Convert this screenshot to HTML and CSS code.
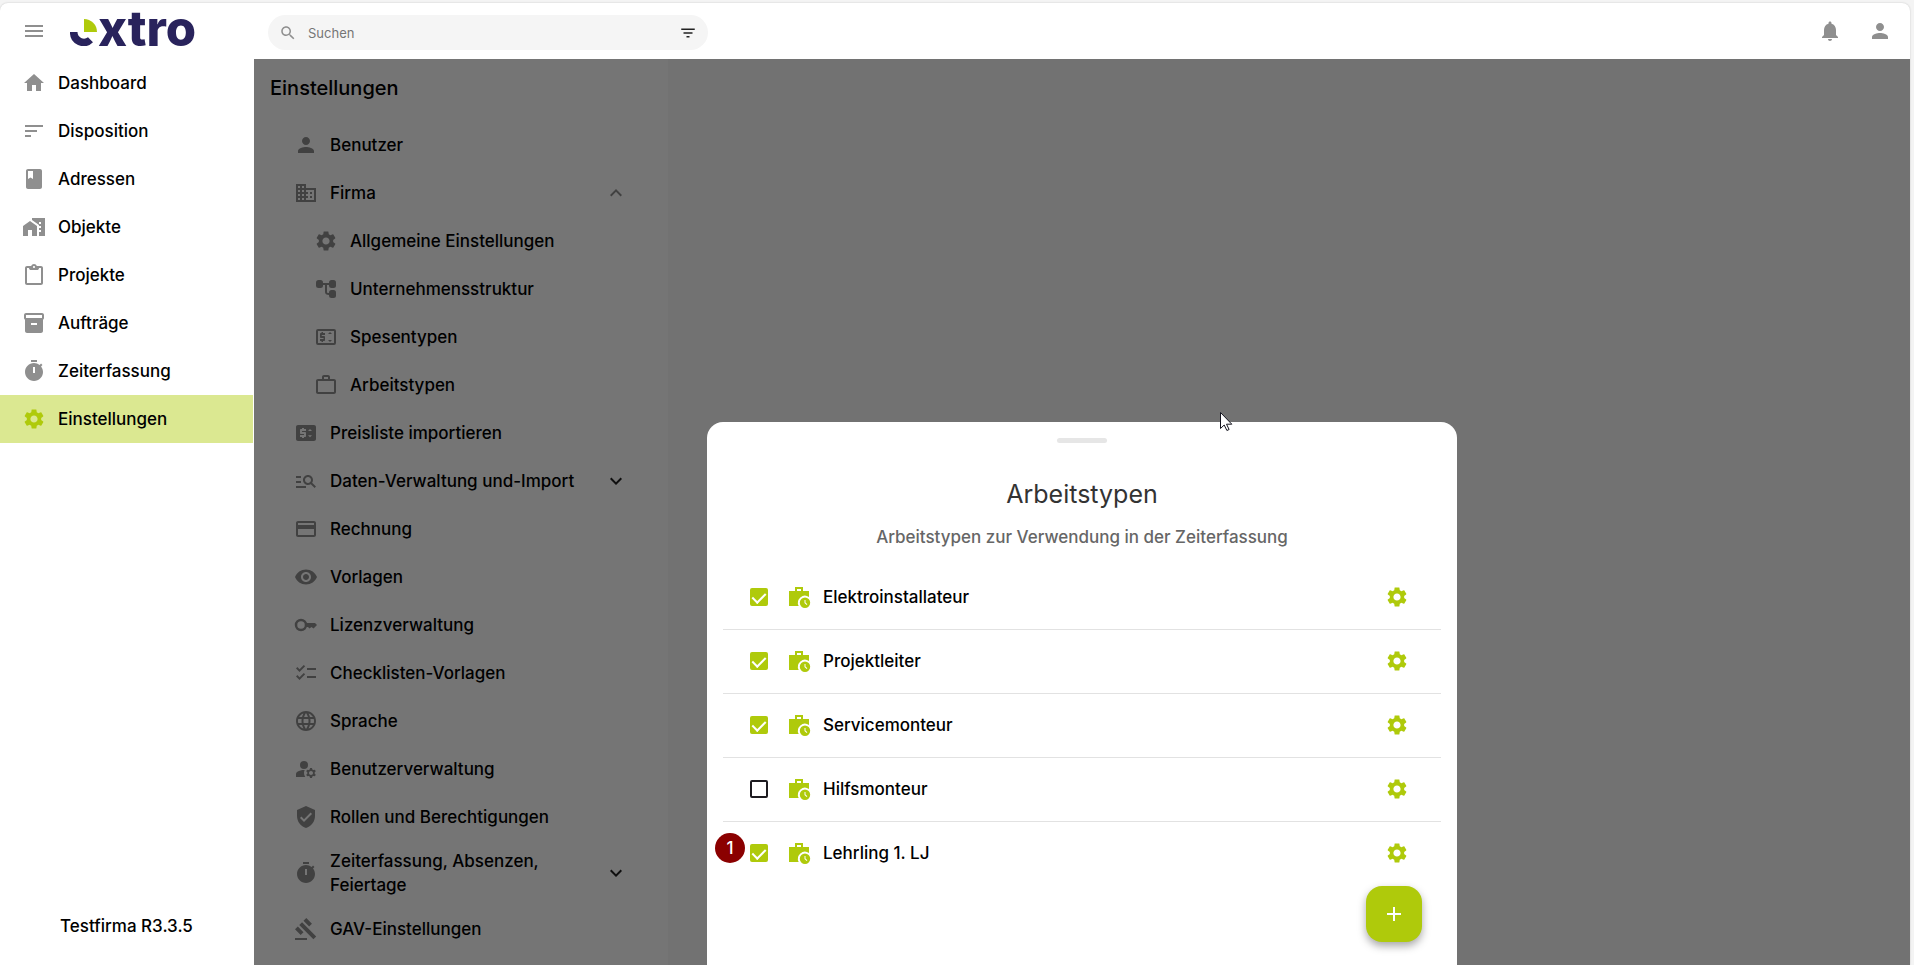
FILE: index.html
```html
<!DOCTYPE html>
<html lang="de">
<head>
  <meta charset="UTF-8">
  <meta name="viewport" content="width=device-width, initial-scale=1.0">
  <title>extro - Arbeitstypen</title>
  <link rel="stylesheet" href="styles.css">
</head>
<body>
  <!-- Icons -->
  <svg class="sprite" aria-hidden="true">
    <symbol id="i-menu" viewBox="0 0 24 24"><path d="M3 18h18v-2H3v2zm0-5h18v-2H3v2zm0-7v2h18V6H3z"/></symbol>
    <symbol id="i-search" viewBox="0 0 24 24"><path d="M15.5 14h-.79l-.28-.27C15.41 12.59 16 11.11 16 9.5 16 5.91 13.09 3 9.5 3S3 5.91 3 9.5 5.91 16 9.5 16c1.61 0 3.09-.59 4.23-1.57l.27.28v.79l5 4.99L20.49 19l-4.99-5zm-6 0C7.01 14 5 11.99 5 9.5S7.01 5 9.5 5 14 7.01 14 9.5 11.99 14 9.5 14z"/></symbol>
    <symbol id="i-filter" viewBox="0 0 24 24"><path d="M10 18h4v-2h-4v2zM3 6v2h18V6H3zm3 7h12v-2H6v2z"/></symbol>
    <symbol id="i-bell" viewBox="0 0 24 24"><path d="M12 22c1.1 0 2-.9 2-2h-4c0 1.1.89 2 2 2zm6-6v-5c0-3.07-1.64-5.64-4.5-6.32V4c0-.83-.67-1.5-1.5-1.5s-1.500.67-1.500 1.500v.68C7.630 5.360 6 7.920 6 11v5l-2 2v1h16v-1l-2-2z"/></symbol>
    <symbol id="i-person" viewBox="0 0 24 24"><path d="M12 12c2.210 0 4-1.790 4-4s-1.790-4-4-4-4 1.790-4 4 1.790 4 4 4zm0 2c-2.670 0-8 1.340-8 4v2h16v-2c0-2.660-5.330-4-8-4z"/></symbol>
    <symbol id="i-home" viewBox="0 0 24 24"><path d="M10 20v-6h4v6h5v-8h3L12 3 2 12h3v8z"/></symbol>
    <symbol id="i-sort" viewBox="0 0 24 24"><path d="M3 18h6v-2H3v2zM3 6v2h18V6H3zm0 7h12v-2H3v2z"/></symbol>
    <symbol id="i-book" viewBox="0 0 24 24"><path d="M18 2H6c-1.100 0-2 .9-2 2v16c0 1.100.9 2 2 2h12c1.100 0 2-.9 2-2V4c0-1.100-.9-2-2-2zM6 4h5v8l-2.500-1.500L6 12V4z"/></symbol>
    <symbol id="i-homework" viewBox="0 0 24 24"><path d="M1 11v10h5v-6h4v6h5V11L8 6z"/><path d="M10 3v1.970l7 5V11h2v2h-2v2h2v2h-2v4h6V3H10zm9 6h-2V7h2v2z"/></symbol>
    <symbol id="i-clipboard" viewBox="0 0 24 24"><path d="M19 3h-4.180C14.400 1.840 13.300 1 12 1s-2.400.84-2.820 2H5c-1.100 0-2 .9-2 2v15c0 1.100.9 2 2 2h14c1.100 0 2-.9 2-2V5c0-1.100-.9-2-2-2zm-7 0c.55 0 1 .45 1 1s-.45 1-1 1-1-.45-1-1 .45-1 1-1zm7 17H5V5h2c0 1.500 1 2 2 2h6c1 0 2-.5 2-2h2v15z"/></symbol>
    <symbol id="i-archive" viewBox="0 0 24 24"><path d="M20 2H4c-1 0-2 .9-2 2v3.010c0 .72.43 1.340 1 1.690V20c0 1.100 1.100 2 2 2h14c.9 0 2-.9 2-2V8.700c.57-.35 1-.97 1-1.690V4c0-1.100-1-2-2-2zm-5 12H9v-2h6v2zm5-7H4V4h16v3z"/></symbol>
    <symbol id="i-timer" viewBox="0 0 24 24"><path d="M15 1H9v2h6V1zm4.030 6.390l1.420-1.420c-.43-.51-.9-.99-1.410-1.410l-1.420 1.420C16.070 4.740 14.120 4 12 4c-4.970 0-9 4.030-9 9s4.020 9 9 9 9-4.030 9-9c0-2.120-.74-4.070-1.970-5.610zM13 14h-2V8h2v6z"/></symbol>
    <symbol id="i-gear" viewBox="0 0 24 24"><path fill-rule="evenodd" d="M19.140 12.940c.04-.3.06-.61.06-.94 0-.32-.02-.64-.07-.94l2.030-1.580c.18-.14.23-.41.12-.61l-1.920-3.320c-.12-.22-.37-.29-.59-.22l-2.390.96c-.5-.38-1.030-.7-1.620-.94l-.36-2.540c-.04-.24-.24-.41-.48-.41h-3.840c-.24 0-.43.17-.47.41l-.36 2.540c-.59.24-1.130.57-1.620.94l-2.390-.96c-.22-.08-.47 0-.59.22L2.740 8.870c-.12.21-.08.47.12.61l2.030 1.580c-.05.3-.09.63-.09.94s.02.64.07.94l-2.030 1.580c-.18.14-.23.41-.12.61l1.920 3.320c.12.22.37.29.59.22l2.390-.96c.5.38 1.030.7 1.620.94l.36 2.540c.05.24.24.41.48.41h3.840c.24 0 .44-.17.47-.41l.36-2.540c.59-.24 1.130-.56 1.620-.94l2.390.96c.22.08.47 0 .59-.22l1.920-3.320c.12-.22.07-.47-.12-.61l-2.010-1.580zM12 15.600c-1.980 0-3.600-1.620-3.600-3.600s1.620-3.600 3.600-3.600 3.600 1.620 3.600 3.600-1.620 3.600-3.600 3.600z"/></symbol>
    <symbol id="i-business" viewBox="0 0 24 24"><path d="M12 7V3H2v18h20V7H12zM6 19H4v-2h2v2zm0-4H4v-2h2v2zm0-4H4V9h2v2zm0-4H4V5h2v2zm4 12H8v-2h2v2zm0-4H8v-2h2v2zm0-4H8V9h2v2zm0-4H8V5h2v2zm10 12h-8v-2h2v-2h-2v-2h2v-2h-2V9h8v10zm-2-8h-2v2h2v-2zm0 4h-2v2h2v-2z"/></symbol>
    <symbol id="i-tree" viewBox="0 0 24 24"><path d="M12 8v7c0 2 1 2 3 2h2" fill="none" stroke="currentColor" stroke-width="2"/><path d="M8 6h9v2H8z"/><rect x="2" y="3" width="7" height="8" rx="2.500"/><rect x="15" y="3" width="7" height="8" rx="2.500"/><rect x="15" y="13" width="7" height="8" rx="2.500"/></symbol>
    <symbol id="i-cash-line" viewBox="0 0 24 24"><rect x="3" y="5" width="18" height="14" rx="1" fill="none" stroke="currentColor" stroke-width="2"/><path d="M11 8H9V7H7.500v1H7c-.55 0-1 .45-1 1v3c0 .55.45 1 1 1h2.500v1H6v2h1.500v1H9v-1h1c.55 0 1-.45 1-1v-3c0-.55-.45-1-1-1H7.800v-1H11zM16 7l2 2h-4zM14 15h4l-2 2z"/></symbol>
    <symbol id="i-cash" viewBox="0 0 24 24"><path fill-rule="evenodd" d="M20 4H4c-1.110 0-2 .89-2 2v12c0 1.100.89 2 2 2h16c1.100 0 2-.9 2-2V6c0-1.110-.9-2-2-2zm-8 6H8v1h3c.55 0 1 .45 1 1v3c0 .55-.45 1-1 1h-1v1H8v-1H6v-2h4v-1H7c-.55 0-1-.45-1-1V9c0-.55.45-1 1-1h1V7h2v1h2v2zm4 6.250l-2-2h4l-2 2zM14 10l2-2 2 2h-4z"/></symbol>
    <symbol id="i-bag" viewBox="0 0 24 24"><path fill-rule="evenodd" d="M14 6V4h-4v2h4zM4 8v11h16V8H4zm16-2c1.110 0 2 .89 2 2v11c0 1.110-.89 2-2 2H4c-1.110 0-2-.89-2-2V8c0-1.110.89-2 2-2h4V4c0-1.110.89-2 2-2h4c1.110 0 2 .89 2 2v2h4z"/></symbol>
    <symbol id="i-manage-search" viewBox="0 0 24 24"><path d="M7 9H2V7h5v2zm0 3H2v2h5v-2zm13.590 7l-3.830-3.830c-.8.52-1.740.83-2.760.83-2.760 0-5-2.240-5-5s2.240-5 5-5 5 2.240 5 5c0 1.020-.31 1.960-.83 2.750L22 17.590 20.590 19zM17 11c0-1.650-1.350-3-3-3s-3 1.350-3 3 1.350 3 3 3 3-1.350 3-3zM2 19h10v-2H2v2z"/></symbol>
    <symbol id="i-card" viewBox="0 0 24 24"><path d="M20 4H4c-1.110 0-1.990.89-1.990 2L2 18c0 1.110.89 2 2 2h16c1.110 0 2-.89 2-2V6c0-1.110-.89-2-2-2zm0 14H4v-6h16v6zm0-10H4V6h16v2z"/></symbol>
    <symbol id="i-eye" viewBox="0 0 24 24"><path d="M12 4.500C7 4.500 2.730 7.610 1 12c1.730 4.390 6 7.500 11 7.500s9.270-3.110 11-7.500c-1.730-4.390-6-7.500-11-7.500zM12 17c-2.760 0-5-2.240-5-5s2.240-5 5-5 5 2.240 5 5-2.240 5-5 5zm0-8c-1.660 0-3 1.340-3 3s1.340 3 3 3 3-1.340 3-3-1.340-3-3-3z"/></symbol>
    <symbol id="i-key" viewBox="0 0 24 24"><circle cx="7" cy="12" r="5" fill="none" stroke="currentColor" stroke-width="2.500"/><path d="M11 10h10l2 2-3.500 3.500-2-1.500-2 1.500L14 14h-3z"/></symbol>
    <symbol id="i-checklist" viewBox="0 0 24 24"><path d="M22 7h-9v2h9V7zm0 8h-9v2h9v-2zM5.540 11L2 7.460l1.410-1.410 2.120 2.120 4.240-4.240 1.410 1.410L5.540 11zm0 8L2 15.460l1.410-1.410 2.120 2.120 4.240-4.240 1.410 1.410L5.540 19z"/></symbol>
    <symbol id="i-globe" viewBox="0 0 24 24"><path d="M11.990 2C6.470 2 2 6.480 2 12s4.470 10 9.990 10C17.520 22 22 17.520 22 12S17.520 2 11.990 2zm6.930 6h-2.950c-.32-1.250-.78-2.450-1.380-3.560 1.840.63 3.370 1.910 4.330 3.560zM12 4.040c.83 1.200 1.480 2.530 1.910 3.960h-3.820c.43-1.430 1.080-2.760 1.910-3.960zM4.260 14C4.100 13.360 4 12.690 4 12s.1-1.360.26-2h3.380c-.08.66-.14 1.320-.14 2s.06 1.340.14 2H4.260zm.82 2h2.950c.32 1.250.78 2.450 1.380 3.560-1.840-.63-3.370-1.900-4.330-3.560zm2.950-8H5.080c.96-1.660 2.490-2.930 4.330-3.560C8.810 5.550 8.350 6.750 8.030 8zM12 19.960c-.83-1.200-1.480-2.530-1.910-3.960h3.820c-.43 1.430-1.080 2.760-1.910 3.960zM14.340 14H9.660c-.09-.66-.16-1.320-.16-2s.07-1.350.16-2h4.680c.09.65.16 1.320.16 2s-.07 1.340-.16 2zm.25 5.560c.6-1.110 1.060-2.310 1.380-3.560h2.950c-.96 1.650-2.490 2.930-4.330 3.560zM16.360 14c.08-.66.14-1.320.14-2s-.06-1.340-.14-2h3.380c.16.64.26 1.310.26 2s-.1 1.360-.26 2h-3.380z"/></symbol>
    <symbol id="i-manage-user" viewBox="0 0 24 24"><circle cx="10" cy="8" r="4"/><path d="M10.670 13.020C10.450 13.010 10.230 13 10 13c-2.420 0-4.680.67-6.610 1.820C2.510 15.340 2 16.320 2 17.350V20h9.260A6.960 6.960 0 0 1 10 16c0-1.070.25-2.070.67-2.980z"/><path fill-rule="evenodd" d="M20.750 16c0-.22-.03-.42-.06-.63l1.140-1.010-1-1.730-1.450.49c-.32-.27-.68-.48-1.080-.63L18 11h-2l-.3 1.490c-.4.15-.76.36-1.080.63l-1.450-.49-1 1.730 1.140 1.010c-.03.21-.06.41-.06.63s.03.42.06.63l-1.140 1.010 1 1.730 1.450-.49c.32.27.68.48 1.080.63L16 21h2l.3-1.490c.4-.15.76-.36 1.080-.63l1.450.49 1-1.730-1.140-1.010c.03-.21.06-.41.06-.63zM17 18c-1.100 0-2-.9-2-2s.9-2 2-2 2 .9 2 2-.9 2-2 2z"/></symbol>
    <symbol id="i-shield" viewBox="0 0 24 24"><path d="M12 1L3 5v6c0 5.550 3.840 10.740 9 12 5.160-1.260 9-6.450 9-12V5l-9-4zm-2 16l-4-4 1.410-1.410L10 14.170l6.590-6.590L18 9l-8 8z"/></symbol>
    <symbol id="i-gavel" viewBox="0 0 24 24"><path d="M1 21h12v2H1zM5.245 8.070l2.830-2.827 14.140 14.142-2.828 2.828zM12.317 1l5.657 5.656-2.830 2.830-5.654-5.660zM3.825 9.485l5.657 5.657-2.828 2.828-5.657-5.657z"/></symbol>
    <symbol id="i-up" viewBox="0 0 24 24"><path d="M12 8l-6 6 1.410 1.410L12 10.830l4.590 4.580L18 14z"/></symbol>
    <symbol id="i-down" viewBox="0 0 24 24"><path d="M16.590 8.590L12 13.170 7.410 8.590 6 10l6 6 6-6z"/></symbol>
    <symbol id="i-work-time" viewBox="0 0 24 24"><path fill-rule="evenodd" d="M22 6h-6V2H8v4H2v15h9.700A7 7 0 0 1 22 12.100zM14 6h-4V4h4z"/><path fill-rule="evenodd" d="M18 12.500a5.200 5.200 0 1 0 0 10.400 5.200 5.200 0 0 0 0-10.400zm1.650 7.500L17.500 17.900V15h1v2.500l1.850 1.800z"/></symbol>
    <symbol id="i-plus" viewBox="0 0 24 24"><path d="M19 13h-6v6h-2v-6H5v-2h6V5h2v6h6v2z"/></symbol>
  </svg>

  <div class="app">
    <header class="topbar">
      <div class="brand">
        <button class="icon-btn" aria-label="Menü"><svg class="icon"><use href="#i-menu"/></svg></button>
        <a class="logo" href="#">
          <svg class="logo-mark" viewBox="0 0 28 28">
            <path d="M14 1a13 13 0 0 1 13 13H14z" fill="#afca0b"/>
            <path d="M0 14h7.500a6.500 6.500 0 0 0 10.500 5.200l5 5A13.500 13.500 0 0 1 0 14z" fill="#29235c"/>
          </svg>
          <span class="logo-text">xtro</span>
        </a>
      </div>
      <div class="search">
        <svg class="icon icon-small"><use href="#i-search"/></svg>
        <input type="search" placeholder="Suchen" aria-label="Suchen">
        <button class="icon-btn filter" aria-label="Filter"><svg class="icon icon-small"><use href="#i-filter"/></svg></button>
      </div>
      <div class="actions">
        <button class="icon-btn" aria-label="Benachrichtigungen"><svg class="icon"><use href="#i-bell"/></svg></button>
        <button class="icon-btn" aria-label="Profil"><svg class="icon"><use href="#i-person"/></svg></button>
      </div>
    </header>

    <aside class="sidebar">
      <nav>
        <a class="nav-item" href="#"><svg class="icon"><use href="#i-home"/></svg>Dashboard</a>
        <a class="nav-item" href="#"><svg class="icon"><use href="#i-sort"/></svg>Disposition</a>
        <a class="nav-item" href="#"><svg class="icon"><use href="#i-book"/></svg>Adressen</a>
        <a class="nav-item" href="#"><svg class="icon"><use href="#i-homework"/></svg>Objekte</a>
        <a class="nav-item" href="#"><svg class="icon"><use href="#i-clipboard"/></svg>Projekte</a>
        <a class="nav-item" href="#"><svg class="icon"><use href="#i-archive"/></svg>Aufträge</a>
        <a class="nav-item" href="#"><svg class="icon"><use href="#i-timer"/></svg>Zeiterfassung</a>
        <a class="nav-item active" href="#"><svg class="icon"><use href="#i-gear"/></svg>Einstellungen</a>
      </nav>
      <p class="company">Testfirma R3.3.5</p>
    </aside>

    <main class="content">
      <section class="settings">
        <h1>Einstellungen</h1>
        <nav>
          <a class="set-item" href="#"><svg class="icon"><use href="#i-person"/></svg><span>Benutzer</span></a>
          <button class="set-item"><svg class="icon"><use href="#i-business"/></svg><span>Firma</span><svg class="icon"><use href="#i-up"/></svg></button>
          <a class="set-item sub" href="#"><svg class="icon"><use href="#i-gear"/></svg><span>Allgemeine Einstellungen</span></a>
          <a class="set-item sub" href="#"><svg class="icon"><use href="#i-tree"/></svg><span>Unternehmensstruktur</span></a>
          <a class="set-item sub" href="#"><svg class="icon"><use href="#i-cash-line"/></svg><span>Spesentypen</span></a>
          <a class="set-item sub" href="#"><svg class="icon"><use href="#i-bag"/></svg><span>Arbeitstypen</span></a>
          <a class="set-item" href="#"><svg class="icon"><use href="#i-cash"/></svg><span>Preisliste importieren</span></a>
          <button class="set-item"><svg class="icon"><use href="#i-manage-search"/></svg><span>Daten-Verwaltung und-Import</span><svg class="icon dark"><use href="#i-down"/></svg></button>
          <a class="set-item" href="#"><svg class="icon"><use href="#i-card"/></svg><span>Rechnung</span></a>
          <a class="set-item" href="#"><svg class="icon"><use href="#i-eye"/></svg><span>Vorlagen</span></a>
          <a class="set-item" href="#"><svg class="icon"><use href="#i-key"/></svg><span>Lizenzverwaltung</span></a>
          <a class="set-item" href="#"><svg class="icon"><use href="#i-checklist"/></svg><span>Checklisten-Vorlagen</span></a>
          <a class="set-item" href="#"><svg class="icon"><use href="#i-globe"/></svg><span>Sprache</span></a>
          <a class="set-item" href="#"><svg class="icon"><use href="#i-manage-user"/></svg><span>Benutzerverwaltung</span></a>
          <a class="set-item" href="#"><svg class="icon"><use href="#i-shield"/></svg><span>Rollen und Berechtigungen</span></a>
          <button class="set-item"><svg class="icon"><use href="#i-timer"/></svg><span>Zeiterfassung, Absenzen, Feiertage</span><svg class="icon dark"><use href="#i-down"/></svg></button>
          <a class="set-item" href="#"><svg class="icon"><use href="#i-gavel"/></svg><span>GAV-Einstellungen</span></a>
        </nav>
      </section>

      <div class="overlay">
        <div class="sheet" role="dialog" aria-labelledby="sheetTitle">
          <div class="handle"></div>
          <h2 id="sheetTitle">Arbeitstypen</h2>
          <p class="sheet-info">Arbeitstypen zur Verwendung in der Zeiterfassung</p>
          <ul class="type-list">
            <li class="type-row">
              <input type="checkbox" id="type1" checked>
              <label for="type1"><svg class="icon"><use href="#i-work-time"/></svg>Elektroinstallateur</label>
              <button class="icon-btn" aria-label="Bearbeiten"><svg class="icon"><use href="#i-gear"/></svg></button>
            </li>
            <li class="type-row">
              <input type="checkbox" id="type2" checked>
              <label for="type2"><svg class="icon"><use href="#i-work-time"/></svg>Projektleiter</label>
              <button class="icon-btn" aria-label="Bearbeiten"><svg class="icon"><use href="#i-gear"/></svg></button>
            </li>
            <li class="type-row">
              <input type="checkbox" id="type3" checked>
              <label for="type3"><svg class="icon"><use href="#i-work-time"/></svg>Servicemonteur</label>
              <button class="icon-btn" aria-label="Bearbeiten"><svg class="icon"><use href="#i-gear"/></svg></button>
            </li>
            <li class="type-row">
              <input type="checkbox" id="type4">
              <label for="type4"><svg class="icon"><use href="#i-work-time"/></svg>Hilfsmonteur</label>
              <button class="icon-btn" aria-label="Bearbeiten"><svg class="icon"><use href="#i-gear"/></svg></button>
            </li>
            <li class="type-row">
              <span class="step">1</span>
              <input type="checkbox" id="type5" checked>
              <label for="type5"><svg class="icon"><use href="#i-work-time"/></svg>Lehrling 1. LJ</label>
              <button class="icon-btn" aria-label="Bearbeiten"><svg class="icon"><use href="#i-gear"/></svg></button>
            </li>
          </ul>
          <button class="fab" aria-label="Hinzufügen"><svg class="icon"><use href="#i-plus"/></svg></button>
          <svg class="cursor" viewBox="0 0 13 20"><path d="M.5.500v16l3.700-3.500 2.700 5.500 2.200-1-2.600-5.300h5.300z" fill="#fff" stroke="#15151f"/></svg>
        </div>
      </div>
    </main>
  </div>
</body>
</html>
```
FILE: styles.css
```css
* {
  box-sizing: border-box;
}

body {
  margin: 0;
  padding: 3px 4px 0 0;
  height: 100vh;
  overflow: hidden;
  background-color: #f4f4f4;
  color: #000;
  font-family: Inter, "Liberation Sans", sans-serif;
  font-size: 17px;
  font-weight: 500;
  line-height: 24px;
}

h1, h2, p, ul {
  margin: 0;
  padding: 0;
}

a {
  color: inherit;
  text-decoration: none;
}

button {
  padding: 0;
  border: none;
  background: none;
  color: inherit;
  font: inherit;
  text-align: left;
  cursor: pointer;
}

.sprite {
  display: none;
}

.icon {
  flex: none;
  display: block;
  width: 24px;
  height: 24px;
  color: #8f8f8f;
  fill: currentColor;
}

.icon-small {
  width: 18px;
  height: 18px;
}

.app {
  display: grid;
  grid-template-columns: 254px 1fr;
  grid-template-rows: 56px 1fr;
  height: 100%;
  background-color: #fff;
  border-radius: 8px 8px 0 0;
  box-shadow: 0 0 2px rgba(0, 0, 0, 0.2);
}

/* Top bar */
.topbar {
  grid-column: 1 / 3;
  display: flex;
  align-items: center;
  height: 56px;
}

.brand {
  display: flex;
  align-items: center;
  gap: 24px;
  width: 268px;
  padding-left: 22px;
}

.logo {
  display: flex;
  align-items: baseline;
  padding-bottom: 4px;
  color: #29235c;
}

.logo-mark {
  width: 28px;
  height: 28px;
}

.logo-text {
  font-size: 49px;
  font-weight: 800;
  line-height: 56px;
}

.search {
  display: flex;
  align-items: center;
  width: 440px;
  height: 35px;
  margin-top: 3px;
  padding: 0 11px;
  border-radius: 18px;
  background-color: #f5f5f5;
}

.search input {
  flex: 1;
  min-width: 0;
  margin-left: 11px;
  padding: 0;
  border: none;
  outline: none;
  background: none;
  font: inherit;
  font-size: 13px;
  font-weight: 400;
}

.search input::placeholder {
  color: #757575;
}

.filter .icon {
  color: #222;
}

.actions {
  display: flex;
  gap: 26px;
  margin-left: auto;
  padding-right: 18px;
}

/* Main navigation */
.sidebar {
  display: flex;
  flex-direction: column;
  justify-content: space-between;
}

.nav-item {
  display: flex;
  align-items: center;
  gap: 12px;
  height: 48px;
  margin-right: 1px;
  padding-left: 22px;
}

.nav-item.active {
  background-color: #dbe891;
}

.nav-item.active .icon {
  color: #afca0b;
}

.company {
  padding: 0 0 27px 60px;
}

/* Settings */
.content {
  position: relative;
  min-height: 0;
  background-color: #f9f9f9;
  overflow: hidden;
}

.settings {
  width: 414px;
  min-height: 100%;
  padding: 15px 40px 0 16px;
  background-color: #fff;
}

.settings h1 {
  margin-bottom: 19px;
  font-size: 20px;
  font-weight: 500;
  line-height: 28px;
}

.set-item {
  display: flex;
  align-items: center;
  gap: 12px;
  width: 100%;
  min-height: 48px;
  padding: 8px 0 8px 24px;
}

.set-item.sub {
  padding-left: 44px;
}

.set-item span {
  flex: 1;
}

.set-item .dark {
  color: #222;
}

/* Bottom sheet */
.overlay {
  position: absolute;
  inset: 0;
  display: flex;
  align-items: flex-end;
  justify-content: center;
  background-color: rgba(0, 0, 0, 0.54);
}

.sheet {
  position: relative;
  width: 750px;
  max-width: 100%;
  padding: 16px 16px 80px;
  border-radius: 16px 16px 0 0;
  background-color: #fff;
}

.handle {
  width: 50px;
  height: 5px;
  margin: 0 auto;
  border-radius: 3px;
  background-color: #e6e6e6;
}

.sheet h2 {
  margin-top: 35px;
  color: #333;
  font-size: 25px;
  font-weight: 400;
  line-height: 32px;
  text-align: center;
}

.sheet-info {
  margin: 15px 0 16px;
  color: #666;
  text-align: center;
}

.type-list {
  list-style: none;
}

.type-row {
  position: relative;
  display: flex;
  align-items: center;
  height: 64px;
  padding: 0 32px 0 27px;
  box-shadow: 0 1px 0 #e2e2e2;
}

.type-row:last-child {
  box-shadow: none;
}

.type-row input {
  appearance: none;
  flex: none;
  width: 18px;
  height: 18px;
  margin: 0;
  border: 2px solid #1d1b20;
  border-radius: 2px;
}

.type-row input:checked {
  border-color: #afca0b;
  background-color: #afca0b;
}

.type-row input:checked::after {
  content: "";
  display: block;
  width: 6px;
  height: 11px;
  margin: 0 auto;
  border: solid #fff;
  border-width: 0 2px 2px 0;
  transform: rotate(45deg);
}

.type-row label {
  flex: 1;
  display: flex;
  align-items: center;
  gap: 12px;
  padding-left: 19px;
}

.type-row .icon {
  color: #afca0b;
}

.step {
  position: absolute;
  top: 12px;
  left: -8px;
  width: 30px;
  height: 30px;
  border-radius: 50%;
  background-color: #8b0000;
  color: #fff;
  line-height: 30px;
  text-align: center;
}

.fab {
  position: absolute;
  right: 35px;
  bottom: 23px;
  display: flex;
  align-items: center;
  justify-content: center;
  width: 56px;
  height: 56px;
  border-radius: 16px;
  background-color: #afca0b;
  box-shadow: 0 4px 8px rgba(0, 0, 0, 0.35);
}

.fab .icon {
  color: #fff;
}

.cursor {
  position: absolute;
  top: -10px;
  left: 513px;
  width: 13px;
  height: 20px;
}
```
